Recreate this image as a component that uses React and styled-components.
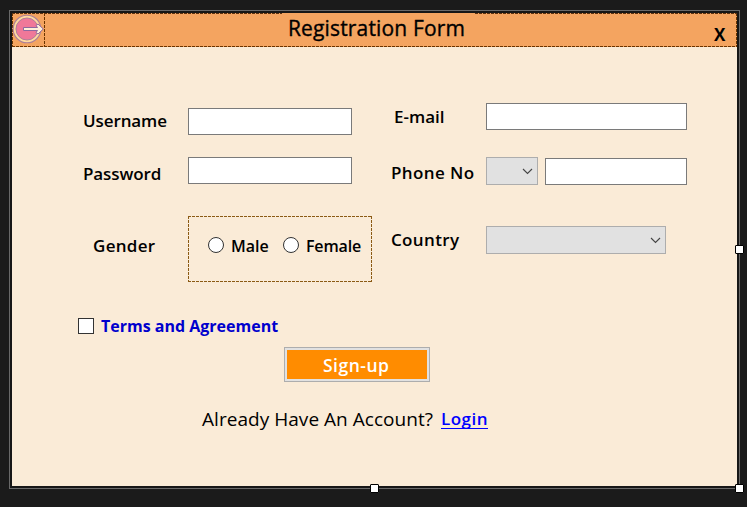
import React from "react";
import styled, { createGlobalStyle, css } from "styled-components";

const Global = createGlobalStyle`
  * { box-sizing: border-box; }
  body { margin: 0; background: #1b1b1b; overflow: hidden; }
  button, input { font: inherit; }
`;

const dashX = (c) => `repeating-linear-gradient(90deg, ${c} 0 3px, transparent 3px 4px)`;
const dashY = (c) => `repeating-linear-gradient(180deg, ${c} 0 3px, transparent 3px 4px)`;

const Desktop = styled.div`
  width: 747px;
  height: 507px;
  padding: 10px 0 0 9px;
  background: #1b1b1b;
  font-family: "Open Sans", "Noto Sans", sans-serif;
  color: #000;
`;

const Frame = styled.div`
  position: relative;
  width: 731px;
  height: 479px;
  padding: 2px;
  border: 1px solid #696969;
  background: #161616;
`;

const Handle = styled.i`
  position: absolute;
  left: ${(p) => p.$x}px;
  top: ${(p) => p.$y}px;
  width: 9px;
  height: 9px;
  background: #fff;
  border: 1px solid #000;
  border-radius: 1px;
`;

const Form = styled.form`
  width: 725px;
  height: 473px;
  background: #faebd7;
`;

const Header = styled.header`
  display: flex;
  height: 34px;
  background:
    ${dashX("#6b3400")} 0 100% / 100% 1px no-repeat,
    ${dashX("#5c3210")} 0 0 / 270px 1px no-repeat,
    ${dashX("#5c3210")} 463px 0 / 262px 1px no-repeat,
    ${dashY("#6b3400")} 0 0 / 1px 100% no-repeat,
    ${dashY("#6b3400")} 100% 0 / 1px 100% no-repeat,
    #f4a460;
`;

const LogoCell = styled.div`
  width: 33px;
  height: 34px;
  background: ${dashY("#6b3400")} 100% 0 / 1px 100% no-repeat;
  svg { display: block; }
`;

const Text = styled.span`
  display: block;
  flex: none;
  width: ${(p) => (p.$w ? `${p.$w}px` : "auto")};
  margin: ${(p) => p.$m || "0"};
  font-size: ${(p) => p.$size || 17}px;
  font-weight: ${(p) => p.$weight || 600};
  letter-spacing: ${(p) => p.$ls || 0}px;
  line-height: 24px;
  white-space: nowrap;
`;

const Title = styled(Text)`
  -webkit-text-stroke: 0.35px #000;
`;

const Close = styled.button`
  margin: 11px 0 0 auto;
  width: 35px;
  height: 22px;
  padding: 0 0 0 12px;
  border: 0;
  background: none;
  text-align: left;
  font-size: 17px;
  font-weight: 700;
  line-height: 22px;
`;

const Columns = styled.div`
  display: grid;
  grid-template-columns: 308px 1fr;
  height: 235px;
  padding: 56px 0 0 71px;
`;

const Column = styled.div`
  display: flex;
  flex-direction: column;
`;

const Row = styled.div`
  display: flex;
  align-items: flex-start;
  height: ${(p) => p.$h}px;
`;

const Input = styled.input`
  width: ${(p) => p.$w}px;
  height: 27px;
  margin: ${(p) => p.$top || 0}px 0 0;
  padding: 0 4px;
  border: 1px solid #7a7a7a;
  border-radius: 0;
  background: #fff;
  outline: 0;
`;

const SelectBox = styled.div`
  display: flex;
  justify-content: flex-end;
  align-items: center;
  width: ${(p) => p.$w}px;
  height: 28px;
  margin: 0 ${(p) => p.$gap || 0}px 0 0;
  padding: 0 4px 0 0;
  border: 1px solid #adadad;
  background: #e1e1e1;
`;

const Select = (props) => (
  <SelectBox {...props} role="combobox">
    <svg width="11" height="8" viewBox="0 0 11 8" fill="none" stroke="#444" strokeWidth="1.1">
      <path d="M1 2 5.5 6.5 10 2" />
    </svg>
  </SelectBox>
);

const GenderGroup = styled.div`
  display: flex;
  width: 184px;
  height: 66px;
  padding: 21px 0 0 20px;
  background:
    ${dashX("#8b5a14")} 0 0 / 100% 1px no-repeat,
    ${dashX("#8b5a14")} 0 100% / 100% 1px no-repeat,
    ${dashY("#8b5a14")} 0 0 / 1px 100% no-repeat,
    ${dashY("#8b5a14")} 100% 0 / 1px 100% no-repeat;
`;

const mark = css`
  flex: none;
  width: 16px;
  height: 16px;
  margin: 0;
  appearance: none;
  background: #fff;
  border: 1px solid #333;
`;

const Radio = styled.input.attrs({ type: "radio", name: "gender" })`
  ${mark}
  border-radius: 50%;
`;

const Check = styled.input.attrs({ type: "checkbox" })`
  ${mark}
`;

const Terms = styled.label`
  display: flex;
  height: 29px;
  margin: 36px 0 0 66px;
  color: #0000cd;
`;

const SignUp = styled.button`
  display: block;
  width: 146px;
  height: 35px;
  margin: 0 0 0 272px;
  padding: 0 0 0 35px;
  border: 1px solid #adadad;
  box-shadow: inset 0 0 0 2px #e1e1e1;
  background: #ff8c00;
  color: #fff;
  text-align: left;
`;

const Footer = styled.div`
  display: flex;
  margin: 25px 0 0 190px;
`;

const Login = styled.a`
  height: 22px;
  border-bottom: 1px solid #00f;
  color: #00f;
`;

const Logo = () => (
  <svg width="32" height="34" viewBox="0 0 32 34">
    <circle cx="15" cy="16" r="12.4" fill="#f07899" stroke="#ffd9a0" strokeWidth="2.6" />
    <circle cx="15" cy="16" r="13.8" fill="none" stroke="#ad8198" strokeWidth="1.1" />
    <circle cx="15" cy="16" r="11" fill="none" stroke="#ad8198" strokeWidth="1" />
    <path d="M11.5 14.5H25.5L24 12.5 26 11 31.3 16 26 21 24 19.5 25.5 17.5H11.5Z" fill="#fff0d9" stroke="#8d69a0" strokeWidth="1" />
  </svg>
);

export default function App() {
  return (
    <>
      <Global />
      <Desktop>
        <Frame>
          <Form>
            <Header>
              <LogoCell><Logo /></LogoCell>
              <Title $m="3px 0 0 243px" $size={21} $weight={400} $ls={0.15}>Registration Form</Title>
              <Close type="button">X</Close>
            </Header>
            <Columns>
              <Column>
                <Row $h={54}>
                  <Text $w={105} $m="6px 0 0" $ls={-0.1}>Username</Text>
                  <Input $w={164} $top={5} />
                </Row>
                <Row $h={59}>
                  <Text $w={105} $m="5px 0 0" $ls={-0.1}>Password</Text>
                  <Input $w={164} type="password" />
                </Row>
                <Row $h={66}>
                  <Text $w={95} $m="18px 0 0 10px" $ls={0.3}>Gender</Text>
                  <GenderGroup>
                    <Radio />
                    <Text $size={16} $w={52} $m="-3px 0 0 7px">Male</Text>
                    <Radio />
                    <Text $size={16} $m="-3px 0 0 7px" $ls={-0.15}>Female</Text>
                  </GenderGroup>
                </Row>
              </Column>
              <Column>
                <Row $h={54}>
                  <Text $w={92} $m="2px 0 0 3px">E-mail</Text>
                  <Input $w={201} />
                </Row>
                <Row $h={69}>
                  <Text $w={95} $m="4px 0 0" $ls={0.4}>Phone No</Text>
                  <Select $w={52} $gap={7} />
                  <Input $w={142} $top={1} />
                </Row>
                <Row $h={28}>
                  <Text $w={95} $m="2px 0 0" $ls={0.35}>Country</Text>
                  <Select $w={180} />
                </Row>
              </Column>
            </Columns>
            <Terms>
              <Check />
              <Text $size={16} $weight={700} $m="-4px 0 0 7px">Terms and Agreement</Text>
            </Terms>
            <SignUp type="button"><Text $size={17.5} $m="1px 0 0 3px" $ls={0.5}>Sign-up</Text></SignUp>
            <Footer>
              <Text $size={19} $w={239} $weight={400} $ls={0.04}>Already Have An Account?</Text>
              <Login><Text $ls={0.5}>Login</Text></Login>
            </Footer>
          </Form>
          <Handle $x={725} $y={234} />
          <Handle $x={360} $y={473} />
          <Handle $x={725} $y={473} />
        </Frame>
      </Desktop>
    </>
  );
}
